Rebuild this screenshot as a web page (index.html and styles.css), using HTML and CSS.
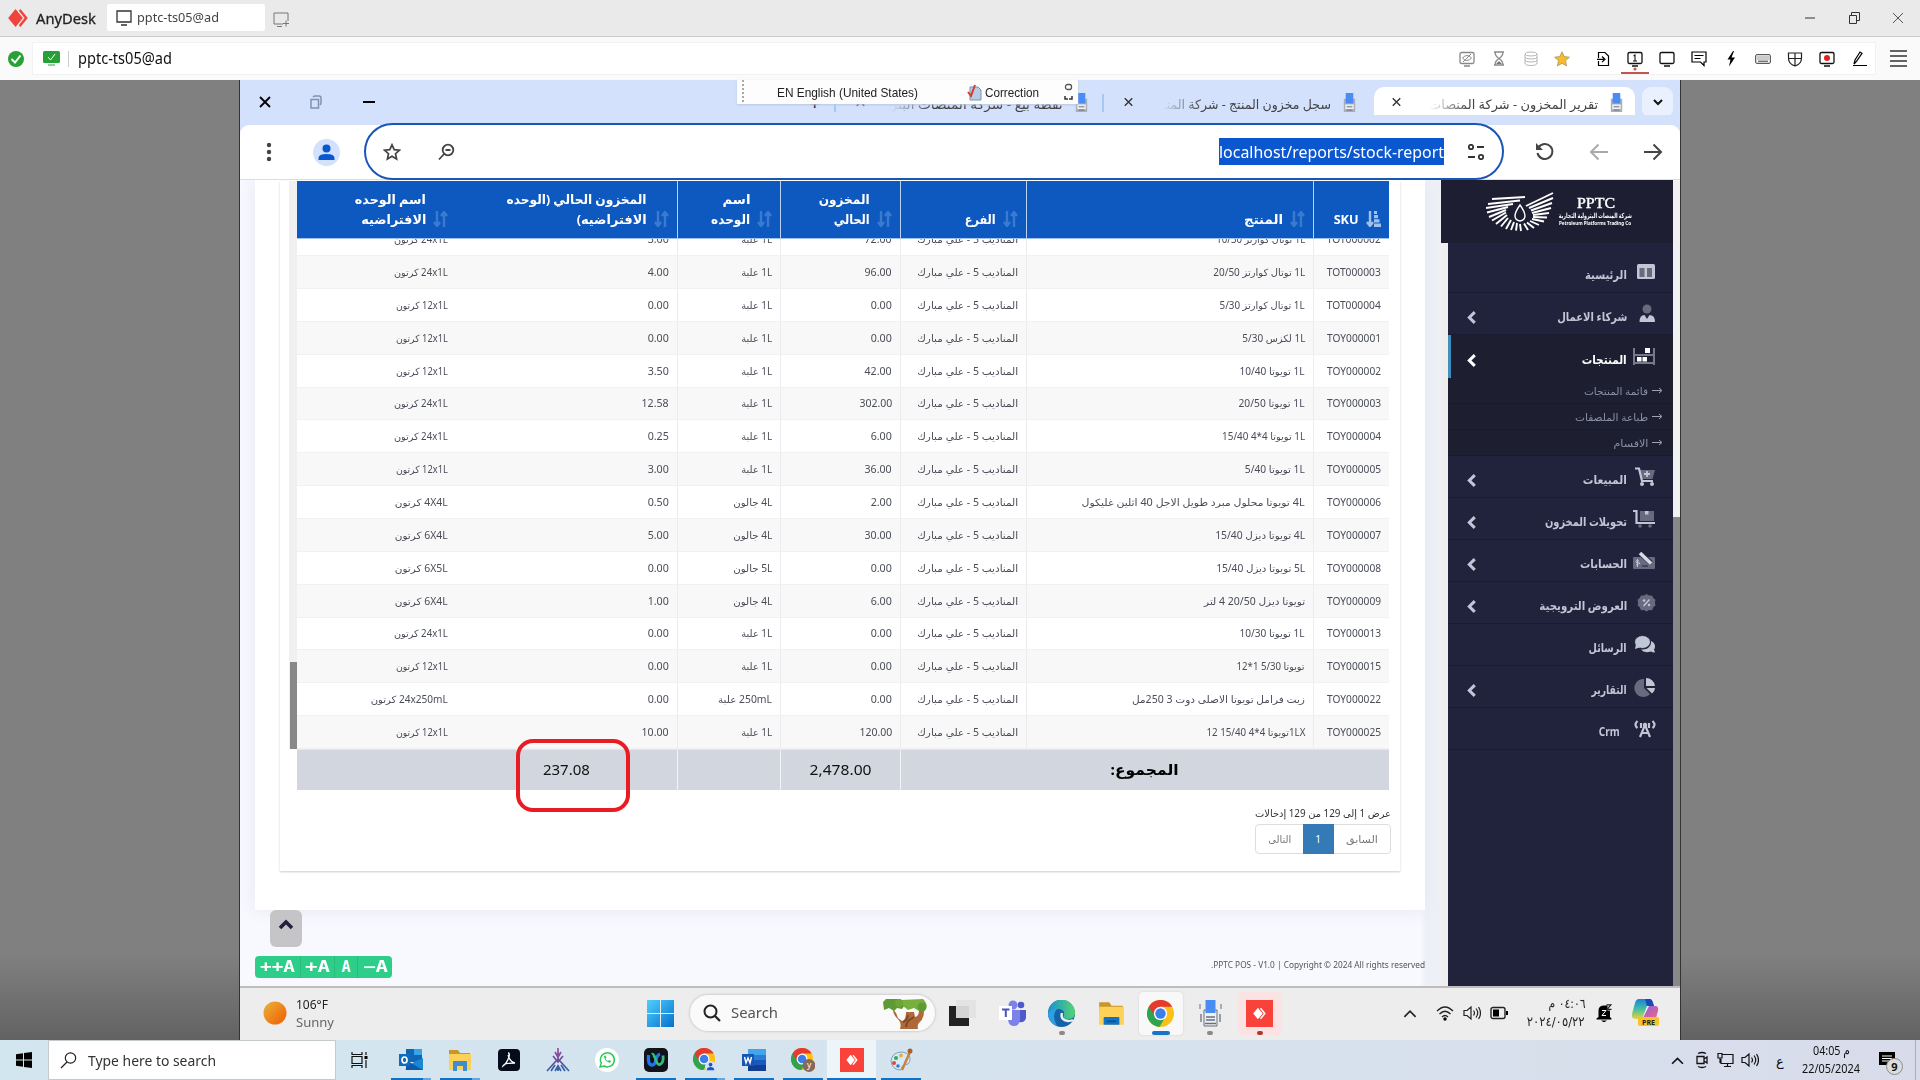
FILE: index.html
```html
<!DOCTYPE html>
<html lang="en">
<head>
<meta charset="utf-8">
<title>AnyDesk - pptc-ts05@ad</title>
<link rel="stylesheet" href="styles.css">
</head>
<body>
<svg class="defs" width="0" height="0">
  <defs>
    <linearGradient id="gSun" x1="0" y1="0" x2="1" y2="1"><stop offset="0" stop-color="#e9b53c"/><stop offset=".75" stop-color="#f0700f"/></linearGradient>
    <linearGradient id="gWin" x1="0" y1="0" x2="1" y2="1"><stop offset="0" stop-color="#4fd0fb"/><stop offset="1" stop-color="#0570cf"/></linearGradient>
    <linearGradient id="gEdge" x1="0" y1="0" x2="1" y2="0"><stop offset="0" stop-color="#1b8fd6"/><stop offset="1" stop-color="#52d66f"/></linearGradient>
    <linearGradient id="gCop" x1="0" y1="0" x2="0" y2="1"><stop offset="0" stop-color="#1d7fe0"/><stop offset=".5" stop-color="#44bfa0"/><stop offset="1" stop-color="#e8d43c"/></linearGradient>
    <linearGradient id="gCop2" x1="0" y1="0" x2="1" y2="1"><stop offset="0" stop-color="#8d5be8"/><stop offset="1" stop-color="#f36a7c"/></linearGradient>
    <linearGradient id="gTri" x1="0" y1="0" x2="0" y2="24" gradientUnits="userSpaceOnUse"><stop offset="0" stop-color="#a14a9c"/><stop offset=".5" stop-color="#6a4a9c"/><stop offset="1" stop-color="#2c6aa8"/></linearGradient>
  </defs>
  <symbol id="anydesk" viewBox="0 0 24 22"><path d="M9 0l9 11-9 11L0 11z"/><path d="M13 2l2-2 9 11-9 11-2-2 7-9z"/></symbol>
  <symbol id="x" viewBox="0 0 12 12"><path d="M1 1l10 10M11 1L1 11" fill="none" stroke="currentColor" stroke-width="1.800"/></symbol>
  <symbol id="favicon" viewBox="0 0 12 20"><path fill="#a9aeb8" d="M0 6h12v14H0z"/><path fill="#eceef2" d="M1.500 12h9v5h-9z"/><path fill="#4a8cf5" d="M2 0h8v11H2z"/><path stroke="#6a707a" d="M3 18h6M3 14.500h6"/></symbol>
  <symbol id="sort" viewBox="0 0 15 16"><path d="M4 0v14M1 11l3 4 3-4M11 16V2M8 5l3-4 3 4" fill="none" stroke="currentColor" stroke-width="2.400"/></symbol>
  <symbol id="sorted" viewBox="0 0 15 16"><path d="M4 0v14M1 11l3 4 3-4" fill="none" stroke="currentColor" stroke-width="2.400"/><path fill="currentColor" d="M8 0h3v3H8zM8 4h4v3.200H8zM8 8.200h5.500v3.200H8zM8 12.400h7V16H8z"/></symbol>
  <symbol id="chev" viewBox="0 0 8 12"><path d="M7 1L2 6l5 5" fill="none" stroke="currentColor" stroke-width="2.800"/></symbol>
  <symbol id="chrome" viewBox="0 0 26 26"><circle cx="13" cy="13" r="13" fill="#fbc116"/><path fill="#31a34e" d="M1.700 6.500A13 13 0 0 0 12 26l6-10-5-3z"/><path fill="#e33b2e" d="M1.700 6.500A13 13 0 0 1 24.300 6.500H13L8 16z"/><circle cx="13" cy="13" r="6.400" fill="#fff"/><circle cx="13" cy="13" r="5" fill="#3b7ded"/></symbol>
  <symbol id="folder" viewBox="0 0 24 24"><path fill="#c9962a" d="M1 2h9l2 3h10v5H1z"/><path fill="#fdd057" d="M1 6h22v16H1z"/></symbol>
  <symbol id="caret" viewBox="0 0 12 8"><path d="M1 7l5-5 5 5" fill="none" stroke="currentColor" stroke-width="1.500"/></symbol>
  <symbol id="speaker" viewBox="0 0 18 16"><path d="M1 5.500h3L8 2v12l-4-3.500H1zM10.500 5.500q2 2.500 0 5M13 3.500q3.500 4.500 0 9M15.500 2q4 6 0 12" fill="none" stroke="currentColor" stroke-width="1.200"/></symbol>
  <symbol id="monitor" viewBox="0 0 16 16"><path d="M2.500 1.500h11q1.500 0 1.500 1.500v8q0 1.500-1.500 1.500h-11Q1 12.500 1 11V3q0-1.500 1.500-1.500zM5 15h6" fill="none" stroke="currentColor" stroke-width="1.300"/></symbol>
</svg>

<header class="ad-title">
  <svg class="ad-logo" fill="#ef443b"><use href="#anydesk"/></svg>
  <span class="ad-name fit" data-w="60">AnyDesk</span>
  <div class="ad-tab">
    <svg width="16" height="16"><path d="M1 1h14v11H1zM5 15h6" fill="none" stroke="#333" stroke-width="1.300"/></svg>
    <span class="fit" data-w="82">pptc-ts05@ad</span>
  </div>
  <svg class="ad-new" width="17" height="16"><path d="M10 12H1V1h14v8M4 14.500h5M10 11.500h6M13 8.500v6" fill="none" stroke="#777"/></svg>
  <div class="ad-win">
    <svg width="12" height="12"><path d="M1 6h10" stroke="#333"/></svg>
    <svg width="12" height="12"><path d="M1.500 3.500h7v8h-7zM3.500 3V.5h8v8H9" fill="none" stroke="#333"/></svg>
    <svg width="12" height="12"><path d="M1 1l10 10M11 1L1 11" stroke="#555"/></svg>
  </div>
</header>

<div class="ad-bar">
  <svg width="16" height="16"><circle cx="8" cy="8" r="8" fill="#27a135"/><path d="M3.500 8l3.500 3.500 5.500-7" fill="none" stroke="#fff" stroke-width="2"/></svg>
  <div class="ad-addr">
    <svg width="17" height="15"><rect width="17" height="12" rx="1.500" fill="#27a135"/><path d="M5 6l2.500 3 4.500-6" fill="none" stroke="#fff"/><path d="M5 14h7" stroke="#27a135"/></svg>
    <i class="vline"></i>
    <span class="fit" data-w="94">pptc-ts05@ad</span>
    <div class="ad-tools">
      <svg class="dim"><use href="#monitor"/><path d="M3.500 7q4.500-5 9 0-4.500 5-9 0M4 11l8-8" fill="none" stroke="currentColor"/></svg>
      <svg class="dim"><path d="M3 1h10M3 14h10M4 1q0 4 4 6.500Q12 5 12 1M4 14q0-4 4-6.500 4 2.500 4 6.500" fill="none" stroke="currentColor" stroke-width="1.300"/><path fill="#777" d="M5 13l3-3 3 3z"/></svg>
      <svg class="faint"><path d="M2 3v9q0 2.500 6 2.500t6-2.500V3M2 6q0 2 6 2t6-2M2 9q0 2 6 2t6-2M2 3q0 2 6 2t6-2-6-2-6 2z" fill="none" stroke="currentColor"/></svg>
      <svg class="star"><path fill="#f7bb2d" stroke="#a8935a" stroke-width=".8" d="M8 .8l2.200 4.800 5.200.6-3.900 3.500 1.100 5.200L8 12.300l-4.600 2.600 1.100-5.200L.6 6.200l5.200-.6z"/></svg>
      <svg class="wide"><path d="M3.500 7V1.500h6.500L13.500 5v9.500h-10V10M2 8.300h7M7 5.500l3 2.800-3 2.800" fill="none" stroke="#000" stroke-width="1.200"/></svg>
      <svg class="on"><use href="#monitor" width="16" height="16"/><path d="M6.500 5L8 4v6M6 10h4" fill="none" stroke="currentColor" stroke-width="1.100"/><circle cx="8" cy="18" r="1.600" fill="#d0564e"/><path d="M-6 22h28" stroke="#c0564e" stroke-width="2"/></svg>
      <svg><use href="#monitor"/></svg>
      <svg><path d="M1 1h14v10h-2v3.500L9.500 11H1zM3.500 4.500h9M3.500 7.500h6" fill="none" stroke="#000" stroke-width="1.200"/></svg>
      <svg><path d="M10 0L4.500 8.500h3L6 15.500l6-9H8.500L11 0z"/></svg>
      <svg><rect x=".7" y="3.700" width="14.600" height="8.600" rx="1" fill="none" stroke="#333"/><path d="M2.500 6h11M2.500 8h11" stroke="#333" stroke-dasharray="1 1"/><path d="M3 10.200h10" stroke="#333"/></svg>
      <svg><path d="M1.500 2h13v5q0 6-6.500 8Q1.500 13 1.500 7zM8 2v13M1.500 7.500h13" fill="none" stroke="#222" stroke-width="1.200"/></svg>
      <svg><use href="#monitor"/><circle cx="8" cy="7" r="3" fill="#e02020"/></svg>
      <svg><path d="M2 14.500h14M3 13l1-4 5-8 2 1.300-5.500 8z" fill="none" stroke="#000" stroke-width="1.200"/></svg>
    </div>
  </div>
  <svg class="menu" width="17" height="17"><path d="M0 1h17M0 6h17M0 11h17M0 16h17" stroke="#333" stroke-width="1.300"/></svg>
</div>

<main class="stage">
<section class="remote">
  <div class="tabstrip">
    <svg class="c-close"><use href="#x"/></svg>
    <svg class="c-rest" width="12" height="14"><path d="M1 4.500h7.500V13H1zM3 2q1-1 2-1h4q2 0 2 2v5q0 1-1 2" fill="none" stroke="#8291ad" stroke-width="1.500"/></svg>
    <i class="c-min"></i>
    <span class="plus">+</span>
    <i class="tsep"></i>
    <div class="tab t3"><svg class="tx"><use href="#x"/></svg><span class="ttl" dir="rtl"><span class="fit" data-w="172">نقطة بيع - شركة المنصات البتر</span></span><svg class="fav"><use href="#favicon"/></svg></div>
    <i class="tsep"></i>
    <div class="tab t2"><svg class="tx"><use href="#x"/></svg><span class="ttl" dir="rtl"><span class="fit" data-w="168">سجل مخزون المنتج - شركة المنـ</span></span><svg class="fav"><use href="#favicon"/></svg></div>
    <div class="tab active"><svg class="tx"><use href="#x"/></svg><span class="ttl" dir="rtl"><span class="fit" data-w="169">تقرير المخزون - شركة المنصات</span></span><svg class="fav"><use href="#favicon"/></svg></div>
    <div class="drop"><svg width="10" height="7"><path d="M1 1l4 4 4-4" fill="none" stroke="#111" stroke-width="2"/></svg></div>
    <div class="langbar">
      <i class="grip"></i><span class="fit l1" data-w="141">EN English (United States)</span>
      <svg width="15" height="17"><path fill="#b9cde6" stroke="#7a93b5" d="M3 3h8l3 3v10H3z"/><path d="M1 8l3 4L8 1" fill="none" stroke="#d93a2b" stroke-width="2"/></svg>
      <span class="fit" data-w="54">Correction</span>
      <svg class="lend" width="10" height="18"><rect x="1.500" y="1.500" width="6" height="5" rx="2" fill="none" stroke="#555" stroke-width="1.300"/><path d="M1 13v3h3M8 13v3H5" fill="none" stroke="#333" stroke-width="1.500"/></svg>
    </div>
  </div>

  <div class="navbar">
    <svg class="dots" width="6" height="20"><circle cx="3" cy="3" r="2.200"/><circle cx="3" cy="10" r="2.200"/><circle cx="3" cy="17" r="2.200"/></svg>
    <svg class="prof" width="27" height="27"><circle cx="13.500" cy="13.500" r="13.500" fill="#d3e1fc"/><circle cx="13.500" cy="9.500" r="4" fill="#0b57d0"/><path fill="#0b57d0" d="M5.500 21v-2q0-4 8-4t8 4v2z"/></svg>
    <div class="omni">
      <svg width="18" height="18"><path d="M9 1.800l2.200 4.800 5.200.6-3.900 3.500 1.100 5.300L9 13.300 4.400 16l1.100-5.300-3.900-3.500 5.200-.6z" fill="none" stroke="#444" stroke-width="1.700"/></svg>
      <svg class="mag" width="18" height="18"><circle cx="11" cy="7" r="5.300" fill="none" stroke="#444" stroke-width="1.800"/><path d="M7.500 10.500L2 16.500M8.500 7h5" stroke="#444" stroke-width="1.800"/></svg>
      <span class="url"><span class="fit" data-w="225">localhost/reports/stock-report</span></span>
      <svg width="18" height="16"><path d="M10 3h7M1 13h7" stroke="#333" stroke-width="2"/><circle cx="4" cy="3" r="2.200" fill="none" stroke="#333" stroke-width="1.800"/><circle cx="14" cy="13" r="2.200" fill="none" stroke="#333" stroke-width="1.800"/></svg>
    </div>
    <svg class="rel" width="20" height="20"><path d="M3.500 5.500A7.500 7.500 0 1 1 2.500 11" fill="none" stroke="#444" stroke-width="2"/><path fill="#444" d="M1 1v7h7z"/></svg>
    <svg class="arr" width="20" height="18"><path d="M19 9H2M9.500 1.500L2 9l7.500 7.500" fill="none" stroke="#aaa" stroke-width="2"/></svg>
    <svg class="arr" width="20" height="18"><path d="M1 9h17M10.500 1.500L18 9l-7.500 7.500" fill="none" stroke="#444" stroke-width="2"/></svg>
  </div>

  <div class="page">
    <div class="content">
      <div class="panel">
        <div class="box" dir="rtl">
          <div class="report">
            <div class="grid">
              <div class="row head" id="head"></div>
              <div class="rows" id="rows"></div>
              <div class="row foot">
                <div class="span3"><b class="fit" data-w="68">المجموع:</b></div>
                <div><span class="fit" data-w="62">2,478.00</span></div>
                <div></div>
                <div class="nob"><span class="fit" data-w="47">237.08</span><i class="mark"></i></div>
                <div></div>
              </div>
            </div>
            <div class="track"><i></i></div>
          </div>
          <div class="info"><span class="fit" data-w="136">عرض 1 إلى 129 من 129 إدخالات</span></div>
          <div class="pager"><span class="p"><span class="fit" data-w="32">السابق</span></span><span class="p cur">1</span><span class="p"><span class="fit" data-w="23">التالى</span></span></div>
        </div>
      </div>
      <div class="totop"><svg width="16" height="12"><path d="M2 10l6-6 6 6" fill="none" stroke="#21223c" stroke-width="3.600"/></svg></div>
      <div class="bottom">
        <div class="sizes"><span class="s1"><span class="fit" data-w="35">++A</span></span><span class="s2"><span class="fit" data-w="25">+A</span></span><span class="s3">A</span><span class="s4"><span class="fit" data-w="25">−A</span></span></div>
        <span class="copy"><span class="fit" data-w="214">.PPTC POS - V1.0 | Copyright © 2024 All rights reserved</span></span>
      </div>
    </div>
    <aside class="side">
      <div class="brand">
        <svg width="68" height="40" viewBox="0 0 68 40"><g id="wing" stroke="#fff" stroke-width="1.900"></g><path d="M34 13q-10 14 0 16 10-2 0-16z" fill="#1e1e33" stroke="#fff" stroke-width="1.400"/></svg>
        <div class="btxt"><strong class="fit" data-w="38">PPTC</strong><span class="fit ar" dir="rtl" data-w="73">شركة المنصات البترولية التجارية</span><em class="fit" data-w="72">Petroleum Platforms Trading Co</em></div>
      </div>
      <nav class="menu-list" dir="rtl" id="menu"></nav>
    </aside>
    <div class="vscroll"><i></i></div>
  </div>

  <div class="rbar">
    <svg class="sun" width="24" height="24"><ellipse cx="12" cy="12" rx="11.500" ry="11.500" fill="url(#gSun)"/></svg>
    <div class="wx"><span class="fit" data-w="32">106°F</span><span class="fit g" data-w="38">Sunny</span></div>
    <svg class="rwin" width="27" height="27"><path fill="url(#gWin)" d="M0 0h13v13H0zM14 0h13v13H14zM0 14h13v13H0zM14 14h13v13H14z"/></svg>
    <div class="pill">
      <svg width="18" height="18"><circle cx="7.500" cy="7.500" r="6" fill="none" stroke="#222" stroke-width="2"/><path d="M12 12l5 5" stroke="#222" stroke-width="2.200"/></svg>
      <span class="fit" data-w="47">Search</span>
      <svg class="tree" width="46" height="31"><path d="M11 11q4 4 5 9l4 3q4-1 4-9h8l1 5q4-1 4-6h5q0 8-5 12-2 2-1 6H18q2-6-2-10-5-4-5-10z" fill="#b0693a"/><path d="M24 29q0-6 8-10M21 24q4-1 5-7" stroke="#7d4524" stroke-width="1.800" fill="none"/><path fill="#5f9b34" d="M1 4l3-3h14l5 6-3 4-5-1-3 3-5-3-5 2z"/><path fill="#77b03f" d="M19 2l22-1q6 6 2 10l-6 2-5-3-6 2-5-4z"/><circle cx="17" cy="5" r="4" fill="#6aa638"/><circle cx="40" cy="9" r="4.500" fill="#5f9b34"/></svg>
    </div>
    <div class="rapps">
      <div><svg viewBox="0 0 27 27"><path fill="#222" d="M0 6h20v20H0z"/><path fill="#e2e2e2" fill-opacity=".93" d="M7 0h20v18H7z"/></svg></div>
      <div><svg viewBox="0 0 27 27"><circle cx="14" cy="5" r="4.500" fill="#7b83eb"/><circle cx="22" cy="5" r="3.300" fill="#5059c9"/><path fill="#5059c9" d="M18 10h9v8q-1 5-7 4z"/><path fill="#7b83eb" d="M9 10h12v10q-1 6-6 6t-6-6z"/><path fill="#fff" d="M0 6h13v14H0z"/><path d="M3 9.500h7.500M6.800 9.500V17" stroke="#4b53bc" stroke-width="2"/></svg></div>
      <div class="dot"><svg viewBox="0 0 27 27"><circle cx="13.500" cy="13.500" r="13.500" fill="#1463a8"/><path fill="url(#gEdge)" d="M0 13A13.500 13.500 0 0 1 27 13q0 6-7 6-6 0-4-4 1-6-6-6-7 0-10 7z"/><path fill="#2e9fe0" d="M0 14q3-6 9-5-6 6 0 17Q0 22 0 14z"/><path d="M14 13q-2 7 6 8 3 0 5-1" stroke="#ededed" stroke-width="2.500" fill="none"/></svg></div>
      <div><svg viewBox="0 0 24 24"><use href="#folder"/><path fill="#1273c4" d="M5 16q0-1 1-1h12q1 0 1 1v6H5z"/><path d="M8 19h8" stroke="#0b4f8e" stroke-width="1.500"/></svg></div>
      <div class="sel"><svg><use href="#chrome"/></svg></div>
      <div class="dot"><svg viewBox="0 0 27 27"><path d="M3 4v5M24 4v5M7 10h13v16H7z" fill="#eef0f4" stroke="#68707c"/><path fill="#4a8cf5" d="M8.500 0h10v13h-10z"/><path d="M9 17h9M9 20h9M8 23.500h11M4 14v8M23 14v8" stroke="#68707c" stroke-width="1.300"/></svg></div>
      <div class="dot red"><svg viewBox="0 0 28 28"><path fill="#f9423a" d="M0 0h28v28H0z"/><svg x="6" y="8" width="16" height="12" fill="#fff"><use href="#anydesk"/></svg></svg></div>
    </div>
    <div class="rtray">
      <svg class="rc" width="14" height="9"><use href="#caret"/></svg>
      <svg width="18" height="16"><path d="M1 6q8-8 16 0M3.500 9q5.500-5.500 11 0M6 12q3-3 6 0" fill="none" stroke="#222" stroke-width="1.300"/><circle cx="9" cy="14" r="1.700"/></svg>
      <svg width="18" height="16"><use href="#speaker"/></svg>
      <svg width="19" height="14"><rect x="1" y="1.500" width="14" height="11" rx="2" fill="none" stroke="#222" stroke-width="1.400"/><path d="M3 3.500h6v7H3zM16 5h2v4h-2z"/></svg>
      <div class="rclock" dir="rtl"><span class="fit" data-w="37">٠٤:٠٦ م</span><span class="fit" data-w="58">٢٠٢٤/٠٥/٢٢</span></div>
      <svg width="16" height="18"><path d="M2.500 13V6.500q0-5 6-5h3v5h2.500V13l1.500 1.500v1H.500v-1zM5 16.500h6L8 18.500z"/><path d="M10.500 .8h4.500l-4 4.500h4.500" fill="none" stroke="#222" stroke-width="1.200"/><path d="M6 6.500h4l-4 5h4" fill="none" stroke="#fff"/></svg>
      <svg class="cop" width="28" height="28"><path fill="url(#gCop)" d="M7 0h10q3 0 4 4l1 3h-7l-5 13H4q-5 0-4-5L3 4q1-4 4-4z"/><path fill="#1a49b8" d="M13 0h5q2 0 3 4l1 3h-7z"/><path fill="url(#gCop2)" d="M17 7h6q4 0 3 5l-2 7H11z"/><rect x="6" y="18" width="21" height="9" rx="2" fill="#fbc224"/><text x="16.500" y="25.500" text-anchor="middle">PRE</text></svg>
    </div>
  </div>
</section>
</main>

<footer class="hbar">
  <svg class="hwin" width="16" height="16"><path d="M0 2.300l7-1v6.200H0zM8 1.100L16 0v7.500H8zM0 8.500h7v6.200l-7-1zM8 8.500h8V16l-8-1.100z"/></svg>
  <div class="hsearch"><svg width="17" height="17"><circle cx="10.500" cy="6" r="5.200" fill="none" stroke="#222" stroke-width="1.200"/><path d="M7 10l-6 6" stroke="#222" stroke-width="1.300"/></svg><span class="fit" data-w="128">Type here to search</span></div>
  <svg class="tv" width="18" height="16"><path d="M1 0v2.500h10V0M1 16v-2.500h10V16M1 4.500h10v7H1zM15 0v3M15 8v8" fill="none" stroke="#111" stroke-width="1.200"/><path d="M13.500 4h3v3h-3z"/></svg>
  <div class="happs">
    <div class="u two"><svg viewBox="0 0 24 24"><path fill="#1066b5" d="M7 1h16v13H7z"/><path fill="#35a5e8" d="M15 1h8v6h-8z"/><path fill="#1b87d6" d="M6 22l9-8 9-4v12z"/><path fill="#0a5cab" d="M7 12l17 10H7z"/><path fill="#0f6cbd" d="M0 6h11v12H0z"/><ellipse cx="5.500" cy="12" rx="2.500" ry="3" fill="none" stroke="#fff" stroke-width="1.700"/></svg></div>
    <div class="u two"><svg viewBox="0 0 24 24"><use href="#folder"/><path fill="#3b8fd0" d="M5 13h14v10h-4v-5H9v5H5z"/></svg></div>
    <div><svg viewBox="0 0 24 24"><rect x="1" y="1" width="22" height="22" rx="4" fill="#050c1c"/><path d="M11 5q2 0 1 4-2 6-6 9 1-3 12-3-5-1-7-8" fill="none" stroke="#fff" stroke-width="1.300"/></svg></div>
    <div><svg viewBox="0 0 24 24"><path d="M12 0v7M12 9v6M9 4l3 5 3-5M7 8l5 6 5-6M10 13L1 23M14 13l9 10M9 17l-4 6M15 17l4 6M12 17v6M9 23l3-5 3 5" fill="none" stroke="url(#gTri)" stroke-width="1.700"/></svg></div>
    <div><svg viewBox="0 0 24 24"><circle cx="12" cy="12" r="12" fill="#fff"/><path d="M5 19l1.200-3.800A7 7 0 1 1 9 18z" fill="none" stroke="#30c85a" stroke-width="1.500"/><path d="M9 8q0 5 6 7l1-2-2-1-1 1q-2-1-2.500-2.500l1-1-1-2z" fill="#30c85a"/></svg></div>
    <div class="u"><svg viewBox="0 0 24 24"><rect width="24" height="24" rx="5" fill="#10131a"/><path d="M4.500 7q-1 10 3.500 10 3 0 4-5t4-6" fill="none" stroke="#1f75f0" stroke-width="3.300"/><path d="M8 6.500q1-1 3 3 2 8 5 7 4-2 3-9" fill="none" stroke="#35b97c" stroke-width="2.800"/></svg></div>
    <div class="u two"><svg viewBox="0 0 26 26"><svg width="24" height="24"><use href="#chrome"/></svg><circle cx="19" cy="20" r="6" fill="#d3e1fc"/><circle cx="19" cy="18" r="2" fill="#1a56c5"/><path fill="#1a56c5" d="M15 24q0-3.500 4-3.500t4 3.500z"/></svg></div>
    <div class="u"><svg viewBox="0 0 24 24"><path fill="#41a5ee" d="M6 1h18v6H6z"/><path fill="#2b7cd3" d="M6 7h18v5H6z"/><path fill="#185abd" d="M6 12h18v5H6z"/><path fill="#103f91" d="M6 17h18v6H6z"/><path fill="#1856b5" d="M0 6h12v12H0z"/><path d="M2.500 9l1.500 6 2-5 2 5 1.500-6" fill="none" stroke="#fff" stroke-width="1.400"/></svg></div>
    <div class="u"><svg viewBox="0 0 26 26"><svg width="24" height="24"><use href="#chrome"/></svg><circle cx="19.500" cy="19" r="7" fill="#8a6858"/><text class="yy" x="19.500" y="22" text-anchor="middle">y</text></svg></div>
    <div class="u cur"><svg viewBox="0 0 28 28"><path fill="#f9423a" d="M0 0h28v28H0z"/><svg x="6" y="8" width="16" height="12" fill="#fff"><use href="#anydesk"/></svg></svg></div>
    <div class="u"><svg viewBox="0 0 24 24"><path d="M2 13Q3 4 13 4q9 1 8 9-1 4-6 4-3 1-3 5-9 0-10-9z" fill="#d6e9f5" stroke="#7aa3bf"/><circle cx="7" cy="10" r="2" fill="#3aa55d"/><circle cx="12" cy="7.500" r="2" fill="#e8b03a"/><circle cx="5" cy="15" r="2" fill="#db4a3a"/><circle cx="9" cy="18" r="1.800" fill="#3a78cf"/><path d="M13 22l8-18" stroke="#c9843c" stroke-width="2.500"/><circle cx="21" cy="3" r="2.500" fill="#a9602a"/></svg></div>
  </div>
  <div class="htray">
    <svg width="13" height="9"><use href="#caret"/></svg>
    <svg class="meet" width="14" height="18"><path d="M2 5.500h7v7H2zM9 8l3-2v6l-3-2M3 2.500q4-2 8 0M3 15.500q4 2 8 0" fill="none" stroke="#111" stroke-width="1.300"/></svg>
    <svg class="net" width="17" height="16"><path d="M5 2.500h11v9H4V7M7 14.500h7M10.500 12v2.500M1 1.500h4V6H1zM3 6v5" fill="none" stroke="#111" stroke-width="1.200"/></svg>
    <svg class="spk" width="18" height="16"><use href="#speaker"/></svg>
    <span class="ain">ع</span>
    <div class="hclock"><span class="fit" data-w="37">م 04:05</span><span class="fit" data-w="58">22/05/2024</span></div>
    <div class="note"><svg width="17" height="17"><path d="M0 0h16v13h-4v3.500L8.500 13H0z"/><path d="M3 4h10M3 6.500h10M3 9h7" stroke="#fff"/></svg><b>9</b></div>
    <i class="edge"></i>
  </div>
</footer>
<script src="app.js"></script>
</body>
</html>
```
FILE: styles.css
```css
* { box-sizing: border-box; }
body {
  margin: 0; width: 1920px; height: 1080px; overflow: hidden;
  display: flex; flex-direction: column;
  font: 13px/1.2 "Noto Sans", "DejaVu Sans", sans-serif; color: #222;
}
svg { display: block; flex: none; }
.defs { position: absolute; }
.fit { display: inline-block; white-space: nowrap; flex: none; }
i { display: block; flex: none; }

/* AnyDesk title and address bars */
.ad-title { height: 37px; flex: none; background: #eaeaea; border-bottom: 1px solid #ccc; display: flex; align-items: center; padding: 0 16px 1px 6px; }
.ad-logo { width: 24px; height: 18px; }
.ad-name { margin-left: 6px; font-size: 15px; color: #222; -webkit-text-stroke: .3px #222; }
.ad-tab { margin-left: 11px; width: 158px; height: 27px; background: #fff; border-radius: 2px; display: flex; align-items: center; padding-left: 9px; gap: 5px; font-size: 13px; color: #444; }
.ad-new { margin: 4px 0 0 8px; }
.ad-win { margin-left: auto; display: flex; gap: 32px; }
.ad-bar { height: 43px; flex: none; background: #fafafa; display: flex; align-items: center; padding-left: 8px; }
.ad-addr { margin-left: 8px; width: 1844px; height: 33px; background: #fff; border: 1px solid #f2f2f2; display: flex; align-items: center; padding: 0 8px 0 10px; font-size: 15.500px; color: #111; }
.vline { width: 1px; height: 16px; background: #ccc; margin: 0 9px 0 8px; }
.ad-tools { margin-left: auto; display: flex; gap: 16px; }
.ad-tools svg { width: 16px; height: 16px; overflow: visible; color: #111; }
.ad-tools .dim { color: #888; }
.ad-tools .faint { color: #b5b5b5; }
.ad-tools .star { margin-left: -1px; }
.ad-tools .wide { margin-left: 9px; }
.menu { margin-left: 14px; }

/* Remote desktop */
.stage { height: 960px; flex: none; background: linear-gradient(#808080 0 875px, #626262 960px); display: flex; justify-content: center; }
.remote { width: 1442px; border: solid #333; border-width: 0 1px; display: flex; flex-direction: column; background: #fff; }
.tabstrip { height: 45px; background: #d3e1fc; display: flex; position: relative; }
.c-close { width: 12px; height: 12px; margin: 16px 0 0 19px; color: #000; }
.c-rest { margin: 15px 0 0 39px; }
.c-min { width: 12px; height: 2px; background: #000; margin: 21px 0 0 41px; }
.plus { margin: 11px 13px 0 434px; width: 12px; font-size: 20px; line-height: 24px; }
.tsep { width: 2px; height: 18px; margin: 14px 0 0; background: #a9c6f5; }
.tab { display: flex; align-items: center; height: 45px; padding-bottom: 1px; color: #444; font-size: 13px; }
.tab .tx { width: 9px; height: 10px; color: #333; }
.fav { width: 13px; height: 19px; }
.ttl { margin-left: auto; margin-right: 12px; padding-top: 5px; -webkit-mask-image: linear-gradient(90deg, transparent, #000 40px); mask-image: linear-gradient(90deg, transparent, #000 40px); }
.t3 { width: 266px; padding-left: 20px; padding-right: 14px; }
.t2 { width: 270px; padding-left: 20px; padding-right: 18px; }
.active { width: 261px; margin-top: 7px; height: 38px; padding: 0 12px 8px 18px; background: #fff; border-radius: 10px 10px 0 0; position: relative; }
.active::before, .active::after { content: ""; position: absolute; bottom: 0; width: 10px; height: 10px; left: -10px; background: radial-gradient(circle at 0 0, transparent 9.500px, #fff 10px); }
.active::after { left: auto; right: -10px; background: radial-gradient(circle at 100% 0, transparent 9.500px, #fff 10px); }
.drop { width: 31px; height: 31px; margin: 7px 0 0 7px; background: #eaf1fe; border-radius: 9px; display: grid; place-items: center; }
.langbar { position: absolute; left: 497px; top: 0; width: 341px; height: 24px; background: #fdfdfd; display: flex; align-items: center; font: 13px "Liberation Sans", sans-serif; color: #222; box-shadow: 0 1px 2px #bcc6da; }
.grip { width: 2px; height: 24px; margin-left: 5px; background: repeating-linear-gradient(#aaa 0 2px, transparent 2px 4px); }
.l1 { margin-left: 33px; }
.langbar svg { margin: 0 3px 0 49px; }
.langbar .lend { margin: 0 0 0 25px; }

.navbar { height: 55px; background: #fff; border-radius: 9px 9px 0 0; border-bottom: 1px solid #ddd; box-shadow: 0 -10px 0 #d3e1fc; display: flex; align-items: center; color: #444; fill: #444; position: relative; }
.dots { margin-left: 26px; }
.prof { margin-left: 41px; }
.omni { margin: -2px 0 -1px 24px; width: 1140px; height: 57px; border: 2.500px solid #1a56b5; border-radius: 29px; display: flex; align-items: center; padding: 0 17px; }
.mag { margin-left: 36px; }
.url { margin: 0 23px 0 auto; background: #0b57d0; color: #fff; font-size: 17px; line-height: 27px; height: 27px; }
.rel { margin-left: 31px; }
.arr { margin-left: 34px; }

/* Web page */
.page { height: 806px; display: flex; }
.content { width: 1201px; background: linear-gradient(90deg, transparent 1180px, #eef0f7 1186px), #f8f9fe; display: flex; flex-direction: column; }
.panel { width: 1170px; height: 730px; margin-left: 15px; padding: 1px 0 0 25px; background: #fff; box-shadow: 0 0 16px #e4e7f2; clip-path: inset(0 -15px -20px -15px); }
.box { width: 1120px; height: 690px; padding-right: 11px; box-shadow: 0 1px 2px #ccc; }
.report { display: flex; height: 611px; }
.grid { width: 1092px; }
.row { display: grid; grid-template-columns: 76px 287px 126px 120px 103px 221px 159px; }
.head { height: 58px; background: #0e59bf; color: #fff; font-weight: 700; font-size: 13px; border-bottom: 1px solid #9fc3f0; }
.head > div { position: relative; display: flex; flex-direction: column; justify-content: flex-end; align-items: flex-start; padding: 0 30px 9px 0; border-left: 1px solid #b9d3f5; }
.head .fit { line-height: 20px; height: 20px; }
.head svg { position: absolute; right: 8px; bottom: 11px; width: 15px; height: 16px; color: #3a7bd0; }
.head svg.hi { color: #9fc0ea; }
.rows { height: 510px; overflow: hidden; display: flex; flex-direction: column; justify-content: flex-end; color: #4a4d58; font-size: 10px; }
.rows .row { height: 32.870px; flex: none; border-bottom: 1px solid #f1f1f3; }
.rows .row:nth-child(even) { background: #f8f8f8; }
.rows .row > div { padding-right: 8px; display: flex; align-items: center; border-left: 1px solid #ececef; }
.row > div:nth-last-child(-n+2) { border-left: 0 !important; }
.foot { height: 41px; background: #d2d6df; border-top: 1px solid #e4e6ec; font-size: 15px; color: #111; }
.foot > div { display: flex; align-items: center; justify-content: center; border-left: 1px solid #f3f4f7; position: relative; padding-bottom: 2px; }
.foot .span3 { grid-column: span 3; }
.foot b { font-size: 15px; color: #000; }
.mark { position: absolute; left: 60px; top: -11px; width: 114px; height: 73px; border: 4.500px solid #e91c24; border-radius: 17px; }
.track { width: 8px; height: 568px; background: #f0f0f0; padding-top: 481px; }
.track i { height: 87px; width: 7px; background: #888; }
.info { margin: 12px -2px 0 0; font-size: 10px; line-height: 18px; height: 18px; color: #333; }
.pager { display: flex; margin: 2px -2px 0 0; width: 136px; height: 30px; border: 1px solid #ddd; border-radius: 4px; font-size: 10px; color: #777; }
.p { flex: 1 1 57px; display: flex; align-items: center; justify-content: center; }
.p.cur { flex: 0 0 31px; margin: -1px 0; background: #337ab7; color: #fff; }
.p:last-child { flex-basis: 47px; }
.totop { width: 32px; height: 37px; margin-left: 30px; border-radius: 6px; background: #c5c5c8; display: flex; justify-content: center; padding-top: 8px; position: relative; }
.bottom { display: flex; justify-content: space-between; margin: 9px 16px 0 15px; }
.sizes { display: flex; height: 22px; background: #2dce89; border-radius: 4px; color: #fff; font: 700 15px/22px "DejaVu Sans Mono", monospace; }
.sizes > span { display: flex; justify-content: center; border-right: 1px solid #28bd7c; }
.s1 { width: 46px; }
.s2, .s4 { width: 34px; }
.s3 { width: 23px; }
.sizes .s4 { border: 0; }
.copy { font-size: 9px; line-height: 17px; color: #555; }

.side { width: 232px; background: #eee; }
.brand { height: 63px; background: #1e1e33; display: flex; padding: 12px 0 0 45px; gap: 5px; color: #fff; }
.btxt { display: flex; flex-direction: column; align-items: flex-start; width: 73px; }
.btxt strong { font: 15px/15px "Liberation Serif", serif; margin: 4px 0 0 18px; -webkit-text-stroke: .4px #fff; }
.btxt .ar { align-self: flex-end; font-size: 7px; line-height: 9px; font-weight: 700; }
.btxt em { font: 700 6px/6px "Noto Sans", sans-serif; }
.menu-list { margin-left: 7px; height: 743px; background: #21223c; padding-top: 8px; color: #bfc7d5; font-weight: 700; font-size: 12px; }
.mi { height: 42px; border-bottom: 1px solid #1a1b31; display: flex; align-items: center; padding: 7px 18px 0 19px; }
.mi .ic { width: 22px; height: 20px; margin: 0 0 7px 6px; overflow: visible; }
.mi .ch { width: 9px; height: 13px; margin-right: auto; }
.mi.open { height: 43px; background: #1e1e31; color: #fff; border: 0; box-shadow: inset 3px 0 #3f8fbd; }
.mi.en .ic { margin-left: 13px; }
.sub { background: #1e1e31; height: 26px; padding-right: 10px; display: flex; align-items: center; gap: 4px; font-weight: 400; font-size: 10px; color: #8b90a4; border-bottom: 1px solid #1a1a2c; }
.vscroll { width: 7px; background: #888; }
.vscroll i { height: 337px; background: #f1f1f1; }

/* Remote taskbar */
.rbar { height: 54px; background: #ededed; border-top: 2px solid #bdbdbd; display: flex; align-items: center; padding-bottom: 2px; }
.sun { margin-left: 23px; }
.wx { margin-left: 9px; width: 40px; display: flex; flex-direction: column; align-items: flex-start; font-size: 13px; line-height: 18px; }
.wx .g { color: #666; }
.rwin { margin-left: 311px; }
.pill { margin-left: 16px; width: 245px; height: 36px; border-radius: 18px; background: #fafafa; box-shadow: 0 0 2px 1px #d0d0d0; display: flex; align-items: center; padding-left: 13px; font-size: 14.500px; color: #555; }
.pill .fit { margin-left: 10px; }
.tree { margin-left: auto; margin-right: 7px; }
.rapps { display: flex; gap: 6px; margin-left: 6px; }
.rapps div { width: 43.500px; height: 43px; border-radius: 4px; display: flex; justify-content: center; padding-top: 8px; position: relative; }
.rapps svg { width: 27px; height: 27px; }
.rapps svg svg { width: 16px; height: 12px; }
.rapps .dot::after, .rapps .sel::after { content: ""; position: absolute; bottom: 0; left: 50%; width: 6px; height: 4px; margin-left: -3px; border-radius: 2px; background: #888; }
.rapps .sel { background: #f8f8f8; box-shadow: 0 0 2px #ccc; }
.rapps .sel::after { width: 18px; margin-left: -9px; background: #1a73c5; }
.rapps .red { background: #fbe3e3; }
.rapps .red::after { background: #b3352d; }
.rtray { margin-left: auto; margin-right: 20px; display: flex; align-items: center; gap: 9px; color: #222; }
.rc { margin-right: 10px; }
.rclock { width: 67px; display: flex; flex-direction: column; align-items: flex-start; font: 13px/18px "DejaVu Sans", sans-serif; margin-right: 2px; }
.cop { margin-left: 11px; }
.cop text { font: 700 7px "Noto Sans", sans-serif; fill: #222; }

/* Host taskbar */
.hbar { height: 40px; flex: none; background: linear-gradient(90deg, #d2e6ef, #d6e3ee 55%, #d8dcea); display: flex; align-items: center; }
.hwin { margin-left: 16px; }
.hsearch { margin-left: 16px; width: 288px; height: 40px; background: #fff; border: 1px solid #c4c9cc; display: flex; align-items: center; gap: 11px; padding-left: 11px; font-size: 15px; color: #333; }
.tv { margin: 0 17px 0 15px; }
.happs { display: flex; height: 40px; }
.happs div { width: 49px; display: flex; justify-content: center; align-items: center; position: relative; }
.happs svg { width: 24px; height: 24px; }
.happs svg svg { width: 24px; height: 24px; }
.happs .cur svg svg { width: 16px; height: 12px; }
.happs .u::after { content: ""; position: absolute; left: 5px; right: 4px; bottom: 0; height: 2px; background: #0d72c8; }
.happs .two::after { background: linear-gradient(90deg, #0d72c8 80%, #65a6dc 80%); }
.happs .cur { background: #edf5f9; }
.happs .cur::after { left: 0; right: 0; }
.yy { font: 9px "Noto Sans", sans-serif; fill: #fff; }
.htray { margin-left: auto; display: flex; align-items: center; height: 40px; color: #111; }
.meet { margin-left: 11px; }
.net { margin-left: 8px; }
.spk { margin-left: 7px; }
.ain { margin: 4px 0 0 17px; width: 10px; font-size: 13px; }
.hclock { width: 72px; margin-left: 9px; display: flex; flex-direction: column; align-items: center; font-size: 12.500px; line-height: 18px; }
.note { margin-left: 12px; width: 24px; position: relative; }
.note b { position: absolute; left: 7px; top: 6px; width: 17px; height: 17px; border-radius: 50%; background: #dcdcdc; border: 1px solid #8a8a8a; font-size: 11px; line-height: 15px; text-align: center; }
.edge { width: 1px; height: 40px; background: #a9adb8; margin: 0 4px 0 12px; }
```
FILE: app.js
```js
const fit = (t, w) => `<span class="fit" data-w="${w}">${t}</span>`;

// Column headings: [text, width] for every line
const heads = [
  [["SKU", 25]],
  [["المنتج", 39]],
  [["الفرع", 31]],
  [["المخزون", 51], ["الحالي", 36]],
  [["اسم", 28], ["الوحده", 39]],
  [["المخزون الحالي (الوحده", 140], ["الافتراضيه)", 70]],
  [["اسم الوحده", 71], ["الافتراضيه", 65]],
];
document.getElementById("head").innerHTML = heads.map((lines, i) =>
  `<div>${lines.map(l => fit(l[0], l[1])).join("")}<svg class="${i ? "" : "hi"}"><use href="#${i ? "sort" : "sorted"}"/></svg></div>`).join("");

const L1 = ["1L علبة", 31], L4 = ["4L جالون", 39], L5 = ["5L جالون", 39], M250 = ["250mL علبة", 54];
const C24 = ["24x1L كرتون", 54], C12 = ["12x1L كرتون", 52];
const stock = [
  ["TOT000002", "1L توتال كوارتز 10/30", 89, "72.00", L1, "3.00", C24],
  ["TOT000003", "1L توتال كوارتز 20/50", 92, "96.00", L1, "4.00", C24],
  ["TOT000004", "1L توتال كوارتز 5/30", 85, "0.00", L1, "0.00", C12],
  ["TOY000001", "1L لكزس 5/30", 63, "0.00", L1, "0.00", C12],
  ["TOY000002", "1L تويوتا 10/40", 65, "42.00", L1, "3.50", C12],
  ["TOY000003", "1L تويوتا 20/50", 66, "302.00", L1, "12.58", C24],
  ["TOY000004", "1L تويوتا 4*4 15/40", 83, "6.00", L1, "0.25", C24],
  ["TOY000005", "1L تويوتا 5/40", 60, "36.00", L1, "3.00", C12],
  ["TOY000006", "4L تويوتا محلول مبرد طويل الاجل 40 اثلين غليكول", 223, "2.00", L4, "0.50", ["4X4L كرتون", 53]],
  ["TOY000007", "4L تويوتا ديزل 15/40", 90, "30.00", L4, "5.00", ["6X4L كرتون", 53]],
  ["TOY000008", "5L تويوتا ديزل 15/40", 89, "0.00", L5, "0.00", ["6X5L كرتون", 53]],
  ["TOY000009", "تويوتا ديزل 20/50 4 لتر", 101, "6.00", L4, "1.00", ["6X4L كرتون", 53]],
  ["TOY000013", "1L تويوتا 10/30", 65, "0.00", L1, "0.00", C24],
  ["TOY000015", "تويوتا 5/30 1*12", 68, "0.00", L1, "0.00", C12],
  ["TOY000022", "زيت فرامل تويوتا الاصلى دوت 3 250مل", 173, "0.00", M250, "0.00", ["24x250mL كرتون", 77]],
  ["TOY000025", "1LXتويوتا 4*4 15/40 12", 99, "120.00", L1, "10.00", C12],
];
document.getElementById("rows").innerHTML = stock.map(r => `<div class="row">${[
  fit(r[0], 54), fit(r[1], r[2]), fit("المناديب 5 - علي مبارك", 101), fit(r[3], r[3].length * 5.8 - 2),
  fit(...r[4]), fit(r[5], r[5].length * 5.8 - 2), fit(...r[6]),
].map(c => `<div>${c}</div>`).join("")}</div>`).join("");

// Duotone sidebar icons on a 22x20 box
const D = "#666b80";
const icons = {
  home: `<rect x="4" y="2" width="18" height="15" rx="1.500" fill="#bfc7d5"/><path fill="${D}" d="M6.500 6h5v9h-5zM14 6h5v9h-5z"/>`,
  user: `<circle cx="14" cy="5" r="4.500" fill="${D}"/><path fill="#bfc7d5" d="M6.500 18q0-7 5-7l2.500 4 2.500-4q5.500 0 5.500 7z"/>`,
  shelf: `<path d="M1 1v17M21 1v17M1 8h20M1 16h20" fill="none" stroke="#777a8c" stroke-width="2"/><path fill="#fff" d="M12 1h5v5h-5zM4 10h4.500v4.500H4zM9.500 10H14v4.500H9.500z"/>`,
  cart: `<path fill="${D}" d="M6 3h16l-2.500 9H8z"/><path d="M2 1.500h4L9 14h11" fill="none" stroke="#bfc7d5" stroke-width="2.200"/><circle cx="9" cy="17" r="2" fill="#bfc7d5"/><circle cx="19" cy="17" r="2" fill="#bfc7d5"/><path d="M11 7h6M14 4v6" stroke="#bfc7d5" stroke-width="1.800"/>`,
  dolly: `<path fill="${D}" d="M7 2h14v10H7z"/><path d="M0 2h3.500v12H22" fill="none" stroke="#bfc7d5" stroke-width="2.200"/><path fill="#bfc7d5" d="M12 2h3.500v3.500H12z"/><circle cx="7" cy="17" r="1.800" fill="${D}"/><circle cx="17" cy="17" r="1.800" fill="${D}"/>`,
  check: `<rect y="6" width="22" height="12" rx="1" fill="${D}"/><path d="M8 3l10 9" stroke="#21223c" stroke-width="5"/><path d="M7 2l11 10.500" stroke="#d5dbe5" stroke-width="3.600"/><path d="M6 10q-3-1.500-3 .5t3 1.500-3 2M4.500 8v8" fill="none" stroke="#bfc7d5"/><path d="M9 15h6" stroke="#21223c"/>`,
  badge: `<path fill="${D}" d="M13.500 1l2.500 1.500 3-.1 1.300 2.600 2.200 1.700-.6 2.900.6 2.900-2.200 1.700L19 17.200l-3-.1-2.500 1.500-2.500-1.500-3 .1-1.300-2.900-2.200-1.700.6-2.900-.6-2.900L6.700 5 8 2.400l3 .1z"/><path d="M10.500 13l6-6.500" stroke="#bfc7d5" stroke-width="1.500"/><circle cx="11" cy="7.500" r="1.300" fill="#bfc7d5"/><circle cx="16" cy="12" r="1.300" fill="#bfc7d5"/>`,
  chat: `<path fill="#bfc7d5" d="M8 14.500q10 1 10-8.500 4 1.500 4 5.500 0 2-1 3l1 3q-3 0-4-1-7 2-10-2z"/><ellipse cx="9.500" cy="7" rx="8" ry="6.500" fill="#bfc7d5" stroke="#21223c"/><path fill="#bfc7d5" d="M3 9l-1 5 6-2z"/>`,
  pie: `<path fill="${D}" d="M11 2v9l6 6a9 9 0 1 1-6-15z"/><path fill="#bfc7d5" d="M13 1a9 9 0 0 1 9 8h-9zM13.500 11H22q0 3-3 5.500z"/>`,
  tower: `<path d="M7 18l5-12 5 12M9 14h6M8 4v5M16 4v5M4.500 2q-4 4 0 7M19.500 2q4 4 0 7" fill="none" stroke="#bfc7d5" stroke-width="2.200"/><circle cx="12" cy="6" r="2.200" fill="#bfc7d5"/>`,
};
const menu = [
  ["home", "الرئيسية", 42, 0], ["user", "شركاء الاعمال", 70, 1], ["shelf", "المنتجات", 45, 1, "open"],
  ["قائمة المنتجات", 64], ["طباعة الملصقات", 73], ["الاقسام", 35],
  ["cart", "المبيعات", 44, 1], ["dolly", "تحويلات المخزون", 82, 1], ["check", "الحسابات", 47, 1],
  ["badge", "العروض الترويجية", 88, 1], ["chat", "الرسائل", 38, 0], ["pie", "التقارير", 35, 1], ["tower", "Crm", 21, 0, "en"],
];
document.getElementById("menu").innerHTML = menu.map(m => m.length === 2
  ? `<div class="sub"><svg width="11" height="7"><path d="M0 3.500h9M7 1l3 2.500L7 6" fill="none" stroke="#9da2b5"/></svg>${fit(m[0], m[1])}</div>`
  : `<div class="mi ${m[4] || ""}"><svg class="ic">${icons[m[0]]}</svg>${fit(m[1], m[2])}${m[3] ? '<svg class="ch"><use href="#chev"/></svg>' : ""}</div>`).join("");

// Feathers of the brand wings: inner point, outer tip
const feathers = [
  [39, 5, 6, 7], [34, 8.5, 2, 12], [27, 12, 0, 16], [22, 15, 1, 20.5], [20, 18, 3, 25], [20, 20.5, 6, 28.5],
  [21, 23, 10, 32], [22, 26, 15, 34.5], [25, 28, 20, 37], [28, 30, 25, 38], [31, 31, 30, 38.5], [34, 32, 35, 39],
  [40, 14, 67, 1], [43, 16, 67, 6], [45, 18.5, 66, 11], [46, 21, 65, 16], [47, 23, 63, 21], [47, 25, 61, 25.5],
  [46, 27, 58, 29.5], [44, 29, 53, 33], [41, 30.5, 48, 36], [38, 31.5, 42, 38],
];
document.getElementById("wing").innerHTML = feathers.map(f => `<path d="M${f[0]} ${f[1]}L${f[2]} ${f[3]}"/>`).join("");

// Condense or widen each label to its designed width
document.querySelectorAll(".fit").forEach(el => {
  const w = el.getBoundingClientRect().width, target = +el.dataset.w;
  const rtl = getComputedStyle(el).direction === "rtl";
  el.style.transformOrigin = rtl ? "100% 50%" : "0 50%";
  el.style.transform = `scaleX(${target / w})`;
  if (rtl) el.style.marginLeft = target - w + "px";
  else el.style.marginRight = target - w + "px";
});
```
